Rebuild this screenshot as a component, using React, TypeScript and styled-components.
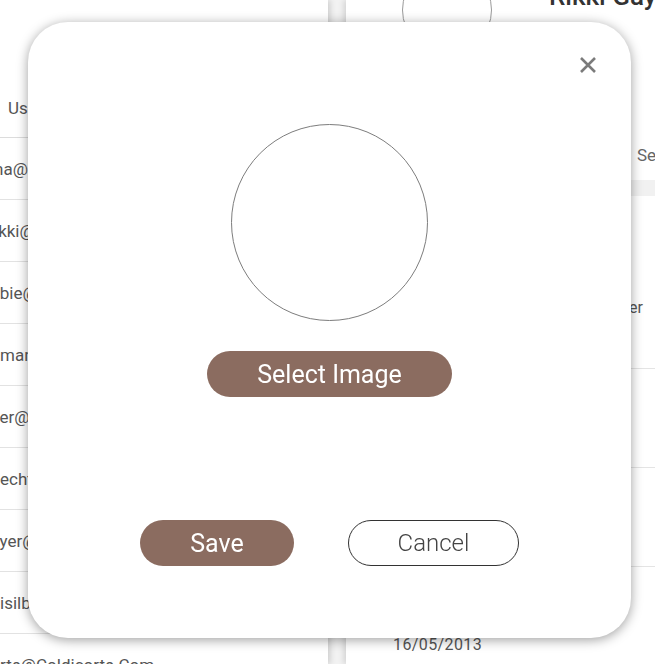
import React from 'react';
import styled, { createGlobalStyle } from 'styled-components';

const GlobalStyle = createGlobalStyle`
  html, body {
    margin: 0;
    padding: 0;
    height: 100%;
    overflow: hidden;
  }
  body {
    font-family: Roboto, "Liberation Sans", Arial, sans-serif;
    background: #f2f2f2;
  }
  * {
    box-sizing: border-box;
  }
`;

const Page = styled.div`
  display: flex;
  gap: 18px;
  height: 100vh;
  overflow: hidden;
`;

const LeftPanel = styled.section`
  width: 328px;
  flex-shrink: 0;
  background: #fff;
  box-shadow: 2px 0 6px rgba(0, 0, 0, 0.16);
  overflow: hidden;
  display: flex;
  flex-direction: column;
`;

const LeftToolbar = styled.div`
  height: 78px;
  flex-shrink: 0;
`;

const HeadCell = styled.div`
  height: 60px;
  flex-shrink: 0;
  display: flex;
  align-items: center;
  padding-left: 8px;
  border-bottom: 1px solid #dcdcdc;
  color: #555;
  font-size: 17px;
  white-space: nowrap;
`;

const EmailRow = styled.div`
  height: 62px;
  flex-shrink: 0;
  display: flex;
  align-items: center;
  border-bottom: 1px solid #e2e2e2;
  color: #555;
  font-size: 17px;
  white-space: nowrap;
`;

const EmailText = styled.span<{ $shift: number }>`
  margin-left: ${({ $shift }) => -$shift}px;
`;

const RightPanel = styled.section`
  flex: 0 0 400px;
  background: #fff;
  box-shadow: -2px 0 6px rgba(0, 0, 0, 0.14);
  display: flex;
  flex-direction: column;
  overflow: hidden;
`;

const ProfileHead = styled.div`
  display: flex;
  align-items: flex-start;
  gap: 57px;
  margin-top: -35px;
  padding-left: 56px;
  height: 90px;
  flex-shrink: 0;
`;

const Avatar = styled.div`
  width: 90px;
  height: 90px;
  border-radius: 50%;
  border: 1px solid #9a9a9a;
  flex-shrink: 0;
`;

const Name = styled.h2`
  margin: 16px 0 0;
  font-size: 26px;
  font-weight: 500;
  color: #333;
  white-space: nowrap;
`;

const Tabs = styled.div`
  display: flex;
  margin-top: 75px;
  height: 50px;
  padding-left: 91px;
  flex-shrink: 0;
`;

const Tab = styled.div`
  width: 100px;
  flex-shrink: 0;
  display: flex;
  align-items: center;
  color: #666;
  font-size: 17px;
  white-space: nowrap;
`;

const ListHead = styled.div`
  height: 16px;
  background: #f1f1f1;
  flex-shrink: 0;
`;

const Entry = styled.div<{ $height: number; $top: number }>`
  height: ${({ $height }) => $height}px;
  flex-shrink: 0;
  display: grid;
  grid-template-columns: 203px 1fr;
  align-items: start;
  padding: ${({ $top }) => $top}px 0 0 47px;
  border-bottom: 1px solid #e4e4e4;
  color: #555;
  font-size: 16px;
  white-space: nowrap;
`;

const DateText = styled.span`
  letter-spacing: 0.4px;
`;

const Modal = styled.div`
  position: fixed;
  left: 28px;
  top: 22px;
  width: 603px;
  height: 616px;
  background: #fff;
  border-radius: 40px;
  box-shadow: 0 2px 12px rgba(0, 0, 0, 0.38);
  display: flex;
  flex-direction: column;
  align-items: center;
`;

const CloseButton = styled.button`
  position: absolute;
  top: 34px;
  right: 34px;
  width: 18px;
  height: 18px;
  padding: 0;
  border: none;
  background: none;
  cursor: pointer;
  display: flex;
`;

const PhotoCircle = styled.div`
  margin-top: 102px;
  width: 197px;
  height: 197px;
  border-radius: 50%;
  border: 1px solid #7d7d7d;
`;

const PillButton = styled.button<{ $variant?: 'filled' | 'outline'; $width: number }>`
  width: ${({ $width }) => $width}px;
  height: 46px;
  border-radius: 23px;
  font-family: Roboto, "Liberation Sans", Arial, sans-serif;
  cursor: pointer;
  padding: 0;
  ${({ $variant = 'filled' }) =>
    $variant === 'filled'
      ? `
    background: #8b6c60;
    border: none;
    color: #fff;
    font-size: 25px;
    font-weight: 400;
  `
      : `
    background: #fff;
    border: 1px solid #333;
    color: #444;
    font-size: 24px;
    font-weight: 300;
  `}
`;

const SelectButton = styled(PillButton)`
  margin-top: 30px;
`;

const Actions = styled.div`
  margin-top: 123px;
  display: flex;
  gap: 54px;
`;

const emails = [
  { text: 'na@Mailinator.Com', shift: 6 },
  { text: 'ikki@Gaylord.Com', shift: 6 },
  { text: 'obie@Mailinator.Com', shift: 10 },
  { text: 'mann@Kunde.Com', shift: 0 },
  { text: 'ker@Mailinator.Com', shift: 9 },
  { text: 'echt@Hotmail.Com', shift: 0 },
  { text: 'oyer@Mailinator.Com', shift: 10 },
  { text: 'isilbo@Mail.Com', shift: 0 },
  { text: 'rte@Coldicorte.Com', shift: 0 },
];

const entries = [
  { height: 173, top: 102, date: '02/11/2019', role: 'Officer' },
  { height: 99, top: 40, date: '21/03/2017', role: '' },
  { height: 99, top: 40, date: '08/09/2015', role: '' },
  { height: 99, top: 68, date: '16/05/2013', role: '' },
];

export default function App() {
  return (
    <>
      <GlobalStyle />
      <Page>
        <LeftPanel>
          <LeftToolbar />
          <HeadCell>User Email</HeadCell>
          {emails.map((e) => (
            <EmailRow key={e.text}>
              <EmailText $shift={e.shift}>{e.text}</EmailText>
            </EmailRow>
          ))}
        </LeftPanel>
        <RightPanel>
          <ProfileHead>
            <Avatar />
            <Name>Rikki Gaylord</Name>
          </ProfileHead>
          <Tabs>
            <Tab>Profile</Tab>
            <Tab>History</Tab>
            <Tab>Settings</Tab>
          </Tabs>
          <ListHead />
          {entries.map((e) => (
            <Entry key={e.date} $height={e.height} $top={e.top}>
              <DateText>{e.date}</DateText>
              <span>{e.role}</span>
            </Entry>
          ))}
        </RightPanel>
      </Page>

      <Modal role="dialog">
        <CloseButton aria-label="Close">
          <svg width="18" height="18" viewBox="0 0 18 18">
            <path d="M2 2L16 16M16 2L2 16" stroke="#7b7b7b" strokeWidth="2.6" />
          </svg>
        </CloseButton>
        <PhotoCircle />
        <SelectButton $width={245}>Select Image</SelectButton>
        <Actions>
          <PillButton $width={154}>Save</PillButton>
          <PillButton $variant="outline" $width={171}>
            Cancel
          </PillButton>
        </Actions>
      </Modal>
    </>
  );
}
